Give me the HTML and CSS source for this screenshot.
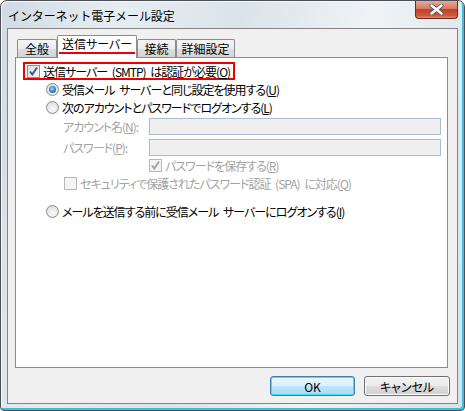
FILE: index.html
```html
<!DOCTYPE html>
<html lang="ja">
<head>
    <meta charset="UTF-8">
    <title>インターネット電子メール設定</title>
    <link rel="stylesheet" href="styles.css">
</head>
<body>

<div class="window">
    <div class="titlebar">
        <span class="title">インターネット電子メール設定</span>
        <div class="close-btn">
            <svg width="15" height="11" viewBox="0 0 15 11">
                <path d="M2.5 1.5 L12.5 9.5 M12.5 1.5 L2.5 9.5" stroke="#5a5a5a" stroke-width="4.2" stroke-linecap="round"/>
                <path d="M2.5 1.5 L12.5 9.5 M12.5 1.5 L2.5 9.5" stroke="#ffffff" stroke-width="2.4" stroke-linecap="round"/>
            </svg>
        </div>
    </div>

    <div class="client">
        <div class="tabs">
            <div class="tab tab-general">全般</div>
            <div class="tab tab-active"><span class="marked">送信サーバー</span></div>
            <div class="tab tab-conn">接続</div>
            <div class="tab tab-adv">詳細設定</div>
        </div>

        <div class="panel">
            <div class="row-smtp">
                <span class="highlight">
                    <span class="check">
                        <svg width="11" height="11" viewBox="0 0 11 11"><path d="M2 5.5 L4.3 8.5 L9 1.5" fill="none" stroke="#3b5897" stroke-width="2"/></svg>
                    </span>
                    送信サーバー (SMTP) は認証が必要(<u>O</u>)
                </span>
            </div>

            <div class="row radio-row">
                <span class="radio"><span class="dot"></span></span>
                受信メール サーバーと同じ設定を使用する(<u>U</u>)
            </div>
            <div class="row radio-row">
                <span class="radio"></span>
                次のアカウントとパスワードでログオンする(<u>L</u>)
            </div>

            <div class="field field-account">
                <span class="field-label">アカウント名(<u>N</u>):</span>
                <span class="textbox"></span>
            </div>
            <div class="field field-password">
                <span class="field-label">パスワード(<u>P</u>):</span>
                <span class="textbox"></span>
            </div>

            <div class="row disabled remember-row">
                <span class="check off">
                    <svg width="11" height="11" viewBox="0 0 11 11"><path d="M2 5.5 L4.3 8.5 L9 1.5" fill="none" stroke="#a6a6a6" stroke-width="2"/></svg>
                </span>
                パスワードを保存する(<u>R</u>)
            </div>
            <div class="row disabled spa-row">
                <span class="check off"></span>
                セキュリティで保護されたパスワード認証 (SPA) に対応(<u>Q</u>)
            </div>

            <div class="row radio-row logon-row">
                <span class="radio"></span>
                メールを送信する前に受信メール サーバーにログオンする(<u>I</u>)
            </div>
        </div>

        <div class="buttons">
            <button class="btn btn-default">OK</button>
            <button class="btn">キャンセル</button>
        </div>
    </div>
</div>

</body>
</html>
```

FILE: styles.css
```css
html, body {
    margin: 0;
    padding: 0;
}
body {
    width: 465px;
    height: 411px;
    font-family: "Noto Sans CJK JP", "Noto Sans", sans-serif;
    font-size: 12px;
    color: #000;
    background: #fff;
}
u {
    text-decoration: underline;
    text-underline-offset: 1px;
}

/* window frame */
.window {
    box-sizing: border-box;
    width: 465px;
    height: 411px;
    border: 1px solid #4b4f55;
    border-radius: 7px 7px 4px 4px;
    padding: 0 6px 6px 6px;
    display: flex;
    flex-direction: column;
    background: linear-gradient(100deg, #cfdae3 0%, #e7eef2 22%, #dae3ea 45%, #eff3f6 70%, #d7e1e9 100%);
    box-shadow: inset -2px -2px 0 #3bbfdf, inset 1px 1px 0 #f6f9fb;
}
.titlebar {
    height: 27px;
    display: flex;
    align-items: flex-start;
    flex: none;
}
.title {
    margin: 6px 0 0 1px;
    line-height: 17px;
    font-size: 12px;
    letter-spacing: -0.1px;
}
.close-btn {
    margin-left: auto;
    width: 43px;
    height: 18px;
    box-sizing: border-box;
    border: 1px solid #6e2a22;
    border-top: none;
    border-radius: 0 0 4px 4px;
    background: linear-gradient(#e8a996 0%, #d67a63 45%, #c4402a 50%, #cf5a3d 85%, #e18a66 100%);
    display: flex;
    align-items: center;
    justify-content: center;
}

/* client area */
.client {
    flex: 1;
    display: flex;
    flex-direction: column;
    background: #f0f0f0;
    border: 1px solid #848484;
    padding: 6px 9px 7px 7px;
    font-feature-settings: "palt";
}
.tabs {
    display: flex;
    align-items: flex-end;
    padding-left: 2px;
    height: 22px;
    flex: none;
}
.tab {
    box-sizing: border-box;
    height: 18px;
    border: 1px solid #898c95;
    border-bottom: none;
    border-radius: 2px 2px 0 0;
    background: linear-gradient(#f4f4f4 0%, #ececec 50%, #dedede 51%, #d4d4d4 100%);
    display: flex;
    align-items: center;
    justify-content: center;
    line-height: 14px;
    padding-top: 1px;
}
.tab-general { width: 40px; }
.tab-conn { width: 39px; }
.tab-adv { width: 59px; }
.tab-active {
    position: relative;
    z-index: 1;
    width: 80px;
    height: 23px;
    margin-bottom: -1px;
    background: #fff;
    padding-top: 0;
    padding-bottom: 3px;
}
.marked {
    border-bottom: 2px solid #e8000b;
    padding: 0 3px 1px 3px;
    line-height: 14px;
}

.panel {
    flex: 1;
    background: #fff;
    border: 1px solid #898c95;
    letter-spacing: -1px;
    word-spacing: 3px;
}

/* rows */
.row {
    height: 18px;
    display: flex;
    align-items: center;
    white-space: nowrap;
}
.row-smtp {
    margin: 4px 0 0 7px;
    height: 18px;
    display: flex;
}
.highlight {
    box-sizing: border-box;
    height: 18px;
    border: 2px solid #ee0000;
    padding: 0 3px 0 2px;
    display: inline-flex;
    align-items: center;
    white-space: nowrap;
}
.radio-row {
    padding-left: 30px;
}
.logon-row {
    margin-top: 10px;
}
.remember-row {
    padding-left: 133px;
}
.spa-row {
    padding-left: 48px;
}
.disabled {
    color: #a3a3a3;
}

.check {
    box-sizing: border-box;
    width: 13px;
    height: 13px;
    flex: none;
    margin-right: 3px;
    border: 1px solid #8e8f8f;
    background: linear-gradient(135deg, #d9d9d9 0%, #f0f0f0 60%, #fdfdfd 100%);
    display: inline-flex;
    align-items: center;
    justify-content: center;
}
.check.off {
    border-color: #b8b8b8;
    background: #f4f4f4;
}
.radio {
    box-sizing: border-box;
    width: 13px;
    height: 13px;
    flex: none;
    margin-right: 3px;
    border-radius: 50%;
    border: 1px solid #8d8d8d;
    background: radial-gradient(circle at 50% 60%, #fbfbfb 0%, #e6e6e6 55%, #cfcfcf 100%);
    display: inline-flex;
    align-items: center;
    justify-content: center;
}
.dot {
    width: 7px;
    height: 7px;
    border-radius: 50%;
    background: radial-gradient(circle at 45% 40%, #a7e0ff 0%, #2e8fd8 45%, #0c3f7e 100%);
}

/* text fields */
.field {
    display: flex;
    align-items: center;
    height: 17px;
    color: #a3a3a3;
    white-space: nowrap;
}
.field-account {
    margin-top: 2px;
}
.field-password {
    margin-top: 4px;
}
.field-label {
    width: 86px;
    padding-left: 47px;
    flex: none;
}
.textbox {
    box-sizing: border-box;
    width: 292px;
    height: 17px;
    border: 1px solid #abbcd2;
    background: #efefef;
}

/* bottom buttons */
.buttons {
    display: flex;
    justify-content: flex-end;
    gap: 9px;
    margin: 8px -2px 0 0;
    flex: none;
}
.btn {
    box-sizing: border-box;
    width: 86px;
    height: 20px;
    font-family: "Noto Sans CJK JP", "Noto Sans", sans-serif;
    font-size: 12px;
    font-feature-settings: "palt";
    color: #000;
    border: 1px solid #707070;
    border-radius: 3px;
    background: linear-gradient(#f2f2f2 0%, #ebebeb 50%, #dddddd 51%, #cfcfcf 100%);
    box-shadow: inset 0 0 0 1px #fcfcfc;
    padding: 0;
}
.btn-default {
    width: 85px;
    border-color: #3c7fb1;
    background: linear-gradient(#eaf6fd 0%, #d9f0fc 50%, #bee6fd 51%, #a7d9f5 100%);
    box-shadow: inset 0 0 0 1px #48d8fb;
}
```
